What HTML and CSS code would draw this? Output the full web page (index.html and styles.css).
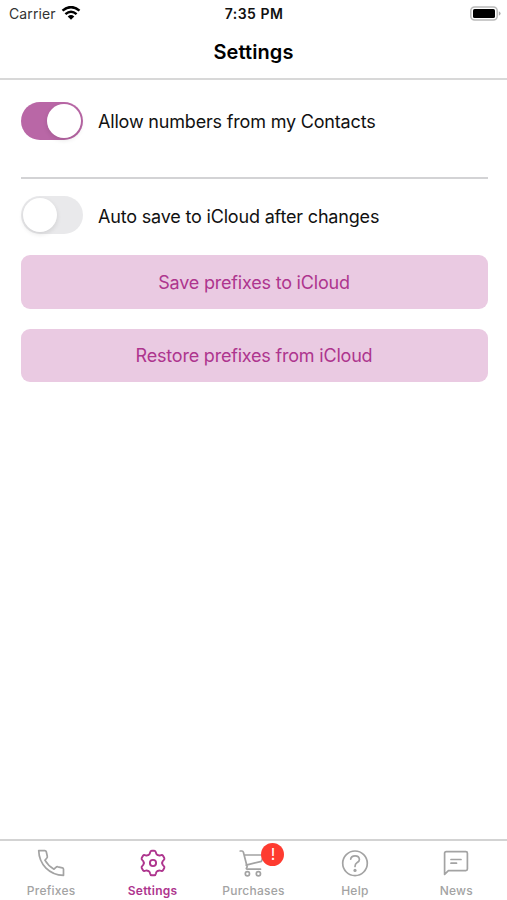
FILE: index.html
```html
<!DOCTYPE html>
<html lang="en">
<head>
<meta charset="utf-8">
<title>Settings</title>
<link rel="stylesheet" href="styles.css">
</head>
<body>
<div class="screen">
  <header class="header">
    <div class="status">
      <div class="carrier"><span class="carrier-name">Carrier</span>
        <svg class="wifi" width="20" height="14" viewBox="0 0 20 14" fill="none" stroke="#000" stroke-width="2.5"><path d="M1.5 4.6Q10-2.4 18.5 4.6M4.4 8.1Q10 3.4 15.6 8.1"/><path d="M10 13.7L6.7 10.5Q10 7.6 13.3 10.5Z" fill="#000" stroke="none"/></svg>
      </div>
      <time class="clock">7:35 PM</time>
      <svg class="battery" width="31" height="16" viewBox="0 0 31 16"><rect x=".8" y=".9" width="26.4" height="13.2" rx="3.8" fill="#fff" stroke="#b9b9b9" stroke-width="1.5"/><rect x="3" y="3" width="22" height="9" rx="1.6"/><path d="M28.8 5.3Q30.6 6 30.6 7.5T28.8 9.7Z" fill="#aaa"/></svg>
    </div>
    <h1 class="title">Settings</h1>
  </header>
  <main class="content">
    <div class="row row-first"><span class="toggle on"><span class="knob"></span></span><span class="label">Allow numbers from my Contacts</span></div>
    <div class="row"><span class="toggle"><span class="knob"></span></span><span class="label">Auto save to iCloud after changes</span></div>
    <button class="button">Save prefixes to iCloud</button>
    <button class="button">Restore prefixes from iCloud</button>
  </main>
  <nav class="tabs">
    <a class="tab"><svg class="icon" viewBox="0 0 28 28"><path d="M1.7 1.6H7.8Q9 1.6 9.3 2.8L10.3 7.2Q10.6 8.4 9.7 9.2L7.9 11.2Q11.2 17 17 20.2L18.9 18.4Q19.7 17.5 20.9 17.8L25.4 18.8Q26.5 19.1 26.5 20.3V26.3Q16 26.3 9 19.2T1.7 1.6Z"/></svg><span class="name">Prefixes</span></a>
    <a class="tab active"><svg class="icon" viewBox="-14 -14 28 28"><defs><path id="tooth" d="M-4.6-8C-3.7-8.6-3.2-8.7-3-10.2Q-2.6-12.3-1.3-12.3H1.3Q2.6-12.3 3-10.2C3.2-8.7 3.7-8.6 4.6-8"/></defs><use href="#tooth"/><use href="#tooth" transform="rotate(60)"/><use href="#tooth" transform="rotate(120)"/><use href="#tooth" transform="rotate(180)"/><use href="#tooth" transform="rotate(240)"/><use href="#tooth" transform="rotate(300)"/><circle r="3.1"/></svg><span class="name">Settings</span></a>
    <a class="tab"><span class="icon-wrap"><svg class="icon" viewBox="0 0 28 28"><path d="M1.2 2H3Q4 2 4.4 3.2L8.2 18M5.3 6H24.8L22.5 12.3L7.1 16.1M8.2 18Q6.2 20.2 8.6 20.2H21.5"/><circle cx="8.4" cy="24.7" r="2.1"/><circle cx="19.4" cy="24.7" r="2.1"/></svg><span class="badge">!</span></span><span class="name">Purchases</span></a>
    <a class="tab"><svg class="icon" viewBox="0 0 28 28"><circle cx="14" cy="14.3" r="12.3"/><path d="M9.7 10.1Q10.1 6.8 14.1 6.8T18.4 10.4Q18.4 12.2 16.2 13.5Q14 14.8 14 17.5"/><circle class="dot" cx="14" cy="21.4" r="1.6"/></svg><span class="name">Help</span></a>
    <a class="tab"><svg class="icon" viewBox="0 0 28 28"><path d="M2.6 25.4V4.2Q2.6 2.6 4.2 2.6H23.8Q25.4 2.6 25.4 4.2V20.1Q25.4 21.7 23.8 21.7H6.4ZM9 10.5H19M9 14.2H14.5"/></svg><span class="name">News</span></a>
  </nav>
</div>
</body>
</html>
```
FILE: styles.css
```css
* { box-sizing: border-box; }
body { margin: 0; background: #fff; color: #111; font-family: Inter, "Liberation Sans", sans-serif; }
.screen { height: 900px; display: flex; flex-direction: column; overflow: hidden; }
.header { height: 80px; border-bottom: 2px solid #d8d8d8; }
.status { height: 27px; display: grid; grid-template-columns: 1fr auto 1fr; align-items: center; padding: 0 6px 0 9px; }
.carrier { display: flex; align-items: center; gap: 5px; font-size: 14px; letter-spacing: .1px; color: #333; }
.wifi { margin-top: -1px; }
.clock { font-size: 14px; font-weight: 600; letter-spacing: .5px; position: relative; left: -1px; }
.battery { justify-self: end; margin-top: 0; }
.title { margin: 9px 0 0; font-size: 20px; line-height: 33px; font-weight: 600; letter-spacing: .1px; text-align: center; color: #000; }
.content { flex: 1; padding: 22px 19.5px 0 20.5px; }
.row { display: flex; align-items: center; height: 38px; gap: 15px; margin-bottom: 21px; }
.row-first { height: 77px; padding-bottom: 38px; border-bottom: 2px solid #d3d3d5; margin-bottom: 17px; }
.toggle { width: 62.5px; height: 38px; flex: none; padding: 2px; border-radius: 19px; background: #e9e9eb; display: flex; }
.toggle.on { background: #b967a6; justify-content: flex-end; }
.knob { width: 34px; height: 34px; border-radius: 50%; background: #fff; box-shadow: 0 2px 5px #0000001c; }
.label { font-size: 18px; letter-spacing: -.18px; white-space: nowrap; padding-top: 2px; }
.button { display: block; width: 467px; height: 53.5px; margin: 0 0 20px; padding: 1px 0 0; border: 0; border-radius: 9px; background: #eacae2; color: #ae358e; font: 18px Inter, sans-serif; letter-spacing: -.2px; }
.tabs { height: 61px; border-top: 2px solid #d3d3d3; display: grid; grid-template-columns: repeat(5, 1fr); color: #a3a3a3; }
.tab { display: flex; flex-direction: column; align-items: center; padding: 8px 0 0; }
.active { color: #ae358e; }
.icon { display: block; width: 28px; height: 28px; fill: none; stroke: currentColor; stroke-width: 1.7; stroke-linejoin: round; stroke-linecap: round; }
.active .icon { stroke-width: 1.9; }
.tab:nth-child(-n+2) { padding-left: 1px; }
.dot { fill: currentColor; stroke: none; }
.icon-wrap { position: relative; }
.badge { position: absolute; left: 22px; top: -6px; width: 23px; height: 23px; border-radius: 50%; background: #fe3b30; color: #fff; font-size: 16px; line-height: 23px; text-align: center; }
.name { margin-top: 6px; font-size: 12px; line-height: 15px; font-weight: 500; letter-spacing: .25px; }
.active .name { font-weight: 600; }
```
